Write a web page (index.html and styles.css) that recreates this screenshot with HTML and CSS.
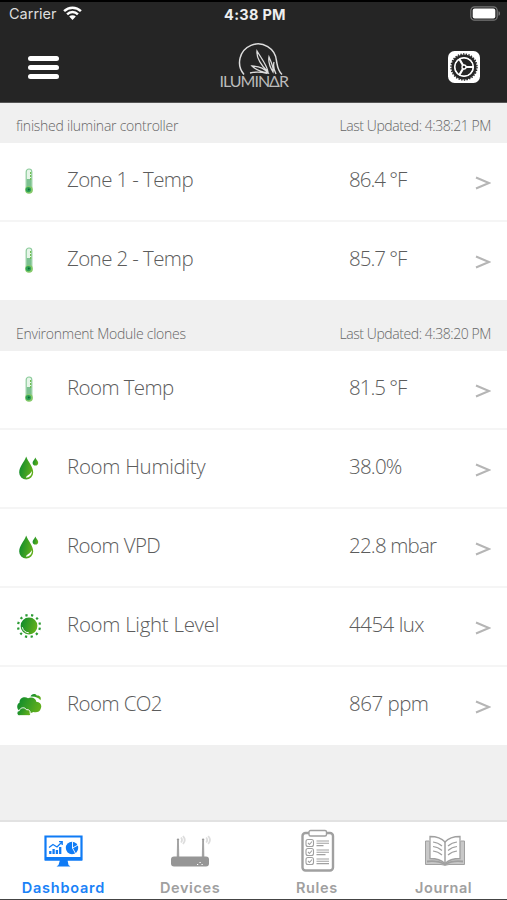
FILE: index.html
```html
<!DOCTYPE html>
<html lang="en">
<head>
<meta charset="utf-8">
<title>Iluminar Dashboard</title>
<link rel="stylesheet" href="styles.css">
</head>
<body>
<svg class="defs" width="0" height="0" aria-hidden="true">
  <defs>
    <linearGradient id="leaf" x1="0" x2="1" y1="0" y2="0.3"><stop offset="0" stop-color="#07892f"/><stop offset="1" stop-color="#5fae1c"/></linearGradient>
    <symbol id="thermo" viewBox="0 0 26 28">
      <path d="M10.200 21V4.800a2.800 2.800 0 0 1 5.600 0V21z" fill="#e6f5e8" stroke="#8ccb9b" stroke-width="1.200"/>
      <path d="M10.800 12h4.400v10h-4.400z" fill="#7cc190"/>
      <path d="M14.600 5v2M14.600 8v2M14.600 11v2" stroke="#6fbd52" stroke-width="1.200"/>
      <circle cx="13" cy="22.800" r="3.900" fill="#86c96a"/>
      <circle cx="12.400" cy="22.600" r="2.700" fill="#2fa257"/>
      <circle cx="12.800" cy="22.600" r="1" fill="#0b6b35"/>
    </symbol>
    <symbol id="drops" viewBox="0 0 26 28">
      <path d="M10.200 2.600C12 8 17.200 12.500 17.200 18.500a7 7 0 0 1-14 0C3.200 12.500 8.500 8 10.200 2.600z" fill="url(#leaf)"/>
      <path d="M15.800 17c.4 4-2 6.400-5.800 6.800.2-2.600 3.800-2.400 5.800-6.800z" fill="#fff"/>
      <path d="M19.300 3.400c.8 2.200 2.900 3.300 2.900 5.400a2.800 2.800 0 0 1-5.600 0c0-2.100 2.200-3.200 2.700-5.400z" fill="url(#leaf)"/>
    </symbol>
    <symbol id="sun" viewBox="0 0 26 28">
      <circle cx="13" cy="14" r="8.400" fill="url(#leaf)"/>
      <circle cx="13" cy="14" r="11" fill="none" stroke="#2c9b35" stroke-width="2.200" stroke-dasharray="2.200 3.560" stroke-dashoffset="4"/>
      <path d="M6.300 15.200c.8 3.600 3.500 5.500 6.500 5.600" fill="none" stroke="#fff" stroke-width="1"/>
    </symbol>
    <symbol id="clouds" viewBox="0 0 26 28">
      <path d="M14.500 5.500c.8-2.600 4.600-3.400 6.300-1 3.500-.3 4.800 2.300 3.600 4.700-2-2.600-5-3.900-9.900-3.700z" fill="url(#leaf)"/>
      <path d="M4 20C.2 19 .5 12.800 3.500 11.800 3.200 7 8.500 4.800 12 7.300c3.500-2 8-.2 8.300 3.400 4.500.2 5.800 4 4.500 6.800-.8 3.400-4.600 4.600-7.400 3.400-3 2-10 2-13.400-.9z" fill="url(#leaf)"/>
      <path d="M3.700 24.700c-3.400 0-3.700-4.600-.4-5 .8-3.300 5.500-4 7.100-1 3-.6 4.300 2 3.700 3.400 1 1.300.2 2.600-1.200 2.600z" fill="url(#leaf)" stroke="#fff" stroke-width="1"/>
    </symbol>
  </defs>
</svg>
<div class="screen">
  <header class="top">
    <div class="status">
      <div class="carrier"><span>Carrier</span>
        <svg width="19" height="14" viewBox="0 0 19 14" fill="none" stroke="#fff" stroke-width="2.500"><path d="M1.100 5.100a12 12 0 0 1 16.800 0M4.100 8.300a7.700 7.700 0 0 1 10.800 0"/><path d="M6.200 10.600a4.700 4.700 0 0 1 6.600 0L9.500 14z" fill="#fff" stroke="none"/></svg>
      </div>
      <div class="clock">4:38 PM</div>
      <svg class="battery" width="31" height="15" viewBox="0 0 31 15"><rect x=".8" y=".8" width="26.400" height="13.400" rx="3.800" fill="none" stroke="#777" stroke-width="1.200"/><rect x="2.700" y="2.600" width="22.600" height="9.800" rx="2" fill="#fff"/><path d="M28.500 5.200c2 .5 2 4.100 0 4.600z" fill="#777"/></svg>
    </div>
    <div class="nav">
      <div class="menu"><i></i><i></i><i></i></div>
      <div class="logo">
        <svg width="68" height="34" viewBox="0 0 68 34" fill="none" stroke="#ddd"><path d="M24 31.500A18.500 18.500 0 1 1 56.500 18c1 5 1 9.500 5.500 13.500" stroke-width="1.500"/><path d="M37 8c-1 8 5 15 11 21-1-7-7-14-11-21zM49 14c-1 5 1 10 4 15 1-5-2-10-4-15zM32 23c6 0 12 2 16 7-6-1-12-3-16-7zM30 30c6-1.500 12-1 17 .5M54 19c-1 4 0 8 2 12" stroke-width="1.300"/></svg>
        <div class="wordmark"><span>ILUMIN</span><span>Δ</span><span>R</span></div>
      </div>
      <svg class="gear" width="32" height="32" viewBox="0 0 32 32"><rect width="32" height="32" rx="6.500" fill="#fff"/><circle cx="16" cy="16" r="13" fill="none" stroke="#262626" stroke-width="1.400" stroke-dasharray="1.400 1.322"/><circle cx="16" cy="16" r="11.200" fill="none" stroke="#262626" stroke-width="2.800"/><circle cx="16" cy="16" r="8.800" fill="#262626"/><circle cx="16" cy="16" r="9.300" fill="none" stroke="#fff" stroke-width="1.500"/><path d="M16 16h9M16 16l-4.500-7.800M16 16l-4.500 7.800" stroke="#fff" stroke-width="2.200"/><circle cx="16" cy="16" r="2.700" fill="#fff"/><circle cx="16" cy="16" r="1.300" fill="#262626"/></svg>
    </div>
  </header>
  <main>
    <section>
      <div class="head"><h2>finished iluminar controller</h2><time>Last Updated: 4:38:21 PM</time></div>
      <div class="row"><svg class="ico"><use href="#thermo"/></svg><span class="name">Zone 1 - Temp</span><span class="val degrees">86.4 °F</span><svg class="go" viewBox="0 0 16 14"><path d="M1 1.500L14 7 1 12.500"/></svg></div>
      <div class="row"><svg class="ico"><use href="#thermo"/></svg><span class="name">Zone 2 - Temp</span><span class="val degrees">85.7 °F</span><svg class="go" viewBox="0 0 16 14"><path d="M1 1.500L14 7 1 12.500"/></svg></div>
    </section>
    <section>
      <div class="head tall"><h2>Environment Module clones</h2><time>Last Updated: 4:38:20 PM</time></div>
      <div class="row"><svg class="ico"><use href="#thermo"/></svg><span class="name">Room Temp</span><span class="val degrees">81.5 °F</span><svg class="go" viewBox="0 0 16 14"><path d="M1 1.500L14 7 1 12.500"/></svg></div>
      <div class="row"><svg class="ico"><use href="#drops"/></svg><span class="name loose">Room Humidity</span><span class="val percent">38.0%</span><svg class="go" viewBox="0 0 16 14"><path d="M1 1.500L14 7 1 12.500"/></svg></div>
      <div class="row"><svg class="ico"><use href="#drops"/></svg><span class="name">Room VPD</span><span class="val percent">22.8 mbar</span><svg class="go" viewBox="0 0 16 14"><path d="M1 1.500L14 7 1 12.500"/></svg></div>
      <div class="row"><svg class="ico"><use href="#sun"/></svg><span class="name loose">Room Light Level</span><span class="val">4454 lux</span><svg class="go" viewBox="0 0 16 14"><path d="M1 1.500L14 7 1 12.500"/></svg></div>
      <div class="row"><svg class="ico"><use href="#clouds"/></svg><span class="name">Room CO2</span><span class="val">867 ppm</span><svg class="go" viewBox="0 0 16 14"><path d="M1 1.500L14 7 1 12.500"/></svg></div>
    </section>
  </main>
  <nav class="tabs">
    <div class="tab active">
      <svg width="42" height="44" viewBox="0 0 42 44"><path d="M2.500 7.500h36v23h-36z" fill="#fff" stroke="#0f7bf5" stroke-width="2.200"/><path d="M2 28h37v3.500H2zM17 31h7.500l1 5 2 1.500H13.500l2-1.500z" fill="#0f7bf5"/><path d="M7.300 25v-3M10.600 25v-5M13.900 25v-4M17.200 25v-7" stroke="#0f7bf5" stroke-width="2.300"/><path d="M6 18.500l4-3 4 2.500 5-5M16 12.700h3.200V16" fill="none" stroke="#0f7bf5" stroke-width="1.300"/><circle cx="29" cy="19" r="6.200" fill="#0f7bf5"/><path d="M29.500 12.500V19l5.500-3M29.500 19l3 5.500" stroke="#fff" stroke-width=".9" fill="none"/></svg>
      <span>Dashboard</span>
    </div>
    <div class="tab">
      <svg width="42" height="44" viewBox="0 0 42 44"><rect x="1" y="27.500" width="38" height="10" rx="3" fill="#969696"/><path d="M7.200 28l.4-16h.8l.4 16zM32.300 28l.4-16h.8l.4 16z" fill="#999" stroke="#999" stroke-width=".8"/><circle cx="8" cy="10.800" r="1.200" fill="#999"/><circle cx="33.100" cy="10.800" r="1.200" fill="#999"/><path d="M11 8.500q2 2.500 0 5M13 7q3.500 4 0 8M36.200 8.500q2 2.500 0 5M38.200 7q3.500 4 0 8" fill="none" stroke="#ddd" stroke-width="1.800"/><path d="M27 35.500h1.200M29.500 33.500h1.200M31.500 35.500h1.200" stroke="#fff" stroke-width="1.200"/></svg>
      <span>Devices</span>
    </div>
    <div class="tab">
      <svg width="42" height="44" viewBox="0 0 42 44" fill="none" stroke="#a0a0a0"><rect x="5.500" y="4" width="30.500" height="37.500" rx="3" fill="#fff" stroke-width="2.400"/><rect x="12" y="1.500" width="17.500" height="5.500" rx="1.500" fill="#fff" stroke-width="1.400"/><g stroke-width="1.100"><rect x="9" y="10.500" width="7.500" height="7" rx="2"/><rect x="9" y="19.500" width="7.500" height="7" rx="2"/><rect x="9" y="28.500" width="7.500" height="7" rx="2"/><path d="M11 14l1.500 1.500 2.500-3M11 23l1.500 1.500 2.500-3M11 32l1.500 1.500 2.500-3"/></g><path d="M19.500 12h12.500M19.500 14.300h12.500M19.500 16.600h7M19.500 21h12.500M19.500 23.300h12.500M19.500 25.600h9M19.500 30h12.500M19.500 32.300h12.500M19.500 34.600h12.500" stroke-width="1.100"/></svg>
      <span>Rules</span>
    </div>
    <div class="tab">
      <svg width="42" height="44" viewBox="0 0 42 44" fill="none" stroke="#a0a0a0"><path d="M5 12H1.500v23.500h15.500q4 1.500 8 0h15.500V12H37" fill="#c8c8c8" stroke-width="1"/><path d="M3 32.500q10-1.500 18 3 8-4.500 18-3" stroke-width="1.800"/><path d="M21 13C17 8.500 11 7.500 6 7.500v22c6 0 11 1 15 5 4-4 9-5 15-5v-22c-5 0-11 1-15 5.500z" fill="#fff" stroke-width="1.300"/><path d="M21 13v21" stroke-width="1.500"/><path d="M9 13q5 .4 9 4M9 17.500q5 .4 9 4M9 22q5 .4 9 4M33 13q-5 .4-9 4M33 17.500q-5 .4-9 4M33 22q-5 .4-9 4" stroke-width="1.100"/></svg>
      <span>Journal</span>
    </div>
  </nav>
</div>
</body>
</html>
```
FILE: styles.css
```css
* { box-sizing: border-box; }
body { margin: 0; background: #f0f0f0; font-family: "Open Sans", "Noto Sans", sans-serif; }
.defs { position: absolute; }
.screen { width: 507px; height: 900px; display: flex; flex-direction: column; background: #f0f0f0; overflow: hidden; border-bottom: 1px solid #444; }
.top { height: 103px; flex: none; background: #252525; border-top: 2px solid #000; border-bottom: 1px solid #555; }
.status { height: 24px; display: grid; grid-template-columns: 1fr auto 1fr; align-items: center; padding: 0 6px 0 9px; font-family: Inter, sans-serif; color: #ddd; }
.carrier { display: flex; align-items: center; gap: 6px; font-size: 14.500px; margin-top: -2px; }
.clock { font-size: 14.500px; font-weight: 650; letter-spacing: .3px; color: #eee; }
.battery { justify-self: end; margin-top: -2px; }
.nav { height: 76px; display: grid; grid-template-columns: 1fr auto 1fr; align-items: center; padding: 0 27px 0 28px; }
.menu { display: flex; flex-direction: column; gap: 4px; width: 31px; margin-top: 6px; }
.menu i { height: 5px; border-radius: 2.500px; background: #fff; }
.logo { width: 68px; height: 48px; margin: 6px 1px 0 0; }
.logo svg { display: block; }
.wordmark { display: flex; justify-content: space-between; height: 14px; line-height: 14px; margin-top: -3px; font-family: Lato, sans-serif; font-weight: 400; font-size: 16px; color: #bbb; letter-spacing: -1px; }
.gear { justify-self: end; margin-top: 5px; }
.head { height: 40px; padding: 4px 16px 0; display: flex; justify-content: space-between; align-items: center; color: #666; font-size: 14px; font-weight: 330; background: #f0f0f0; }
.head.tall { height: 51px; padding-top: 15px; }
.head h2 { margin: 0; font: inherit; letter-spacing: -.25px; }
.head time { letter-spacing: -.43px; }
.row { height: 79px; display: grid; grid-template-columns: 51px 282px 1fr 16px; align-items: start; padding: 0 16px; background: #fff; border-bottom: 2px solid #f5f5f5; color: #5c5c5c; font-size: 20.500px; font-weight: 330; line-height: 28px; letter-spacing: -.6px; }
.row:last-child { height: 78px; border-bottom: 0; }
.ico { width: 26px; height: 28px; margin-top: 24px; }
.name, .val { margin-top: 22px; white-space: nowrap; }
.name.loose { letter-spacing: -.3px; }
.val { letter-spacing: -.5px; }
.val.percent { letter-spacing: -.8px; }
.val.degrees { letter-spacing: -1px; }
.go { width: 16px; height: 14px; margin-top: 33px; fill: none; stroke: #b5b5b5; stroke-width: 2; }
.tabs { margin-top: auto; height: 79px; flex: none; display: grid; grid-template-columns: repeat(4, 1fr); background: #fff; border-top: 2px solid #e2e2e2; }
.tab { display: flex; flex-direction: column; align-items: center; padding-top: 7px; font-family: Inter, sans-serif; font-size: 14.500px; font-weight: 600; letter-spacing: .6px; line-height: 18px; color: #a0a0a0; }
.tab svg { margin-left: 2px; }
.tab span { margin-top: 6px; }
.tab.active { color: #1a82f7; }
.tab.active span { letter-spacing: .75px; }
```
